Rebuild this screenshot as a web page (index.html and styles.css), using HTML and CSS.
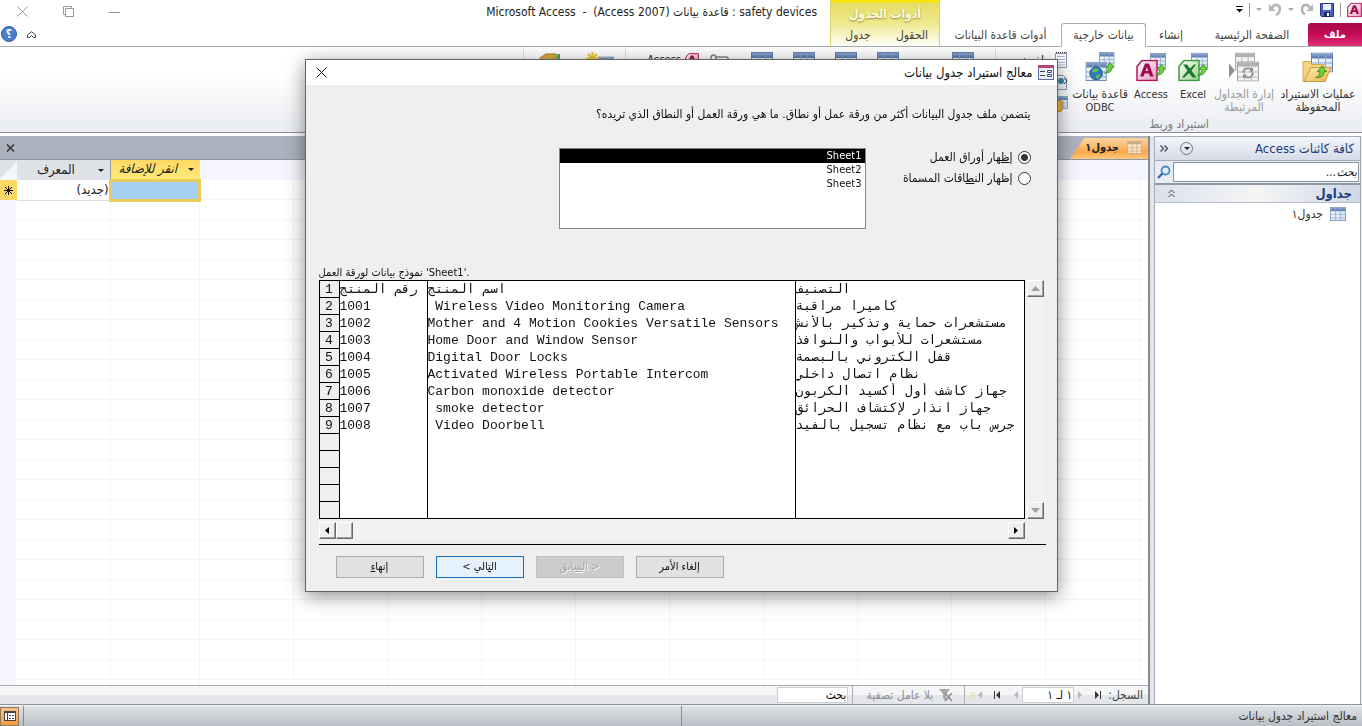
FILE: index.html
```html
<!DOCTYPE html>
<html lang="ar" dir="rtl">
<head>
<meta charset="utf-8">
<title>Microsoft Access</title>
<link rel="stylesheet" href="styles.css">
</head>
<body>
<svg class="defs" aria-hidden="true">
  <defs>
    <linearGradient id="gBlue" x1="0" y1="0" x2="0" y2="1"><stop offset="0" stop-color="#8ba6d0"/><stop offset="1" stop-color="#5577ac"/></linearGradient>
    <linearGradient id="gCell" x1="0" y1="0" x2="1" y2="1"><stop offset="0" stop-color="#fff"/><stop offset="1" stop-color="#cfe0f4"/></linearGradient>
    <linearGradient id="gFolder" x1="0" y1="0" x2="1" y2="1"><stop offset="0" stop-color="#fdf0b8"/><stop offset="1" stop-color="#eeb144"/></linearGradient>
    <linearGradient id="gPink" x1="0" y1="0" x2="1" y2="1"><stop offset="0" stop-color="#fff"/><stop offset="1" stop-color="#e79bbd"/></linearGradient>
    <linearGradient id="gGreen" x1="0" y1="0" x2="1" y2="1"><stop offset="0" stop-color="#fff"/><stop offset="1" stop-color="#9dd18b"/></linearGradient>
    <symbol id="table" viewBox="0 0 22 20">
      <rect x=".5" y=".5" width="21" height="19" fill="url(#gCell)" stroke="#6480ae"/>
      <rect x="1" y="1" width="20" height="5" fill="url(#gBlue)"/>
      <path d="M1 10.5h20M1 15.5h20M7.500 1v18M14.500 1v18" stroke="#8ea6c9" fill="none"/>
    </symbol>
    <symbol id="tableGray" viewBox="0 0 22 20">
      <rect x=".5" y=".5" width="21" height="19" fill="#f1f1f1" stroke="#a3a3a3"/>
      <rect x="1" y="1" width="20" height="4" fill="#b0b0b0"/>
      <path d="M1 10.5h20M1 15.5h20M7.500 1v18M14.500 1v18" stroke="#b9b9b9" fill="none"/>
    </symbol>
    <symbol id="tableTab" viewBox="0 0 22 20">
      <rect x=".5" y=".5" width="21" height="19" fill="#fbe3c4" stroke="#b79a78"/>
      <rect x="1" y="1" width="20" height="4" fill="#c9ad8c"/>
      <path d="M1 10.5h20M1 15.5h20M7.500 1v18M14.500 1v18" stroke="#c4a683" fill="none"/>
    </symbol>
    <symbol id="arrow" viewBox="0 0 12 13">
      <path d="M7 .6 11.500 6H9.200c.2 4-2.800 6.500-8.500 6.200C4 11 5 9 4.800 6H2.500z" fill="#6cd13c" stroke="#35891b" stroke-width=".9"/>
    </symbol>
    <symbol id="a" viewBox="0 0 22 22">
      <path d="M6 1h15v20H1V7z" fill="url(#gPink)" stroke="#b51558" stroke-width="1.500"/>
      <path d="M4 17 9 4h4l4.500 13H14l-1-3H8.500l-1 3zM9.300 11.500h3L11 7.500z" fill="#a3084b" fill-rule="evenodd"/>
    </symbol>
    <symbol id="x" viewBox="0 0 22 22">
      <path d="M6 1h15v20H1V7z" fill="url(#gGreen)" stroke="#3f9a40" stroke-width="1.500"/>
      <path d="M5 5h4l3 4 4-4h2l-4.500 6 5 7h-4l-3.500-4.500L6.500 18H4l5.500-7z" fill="#1c7a2c"/>
    </symbol>
  </defs>
</svg>

<div class="app">
  <header class="top">
    <div class="top-main">
      <div class="qat">
        <svg class="qat-a" viewBox="0 0 22 22"><use href="#a"/></svg>
        <i class="vbar"></i>
        <button class="icon-btn" aria-label="حفظ"><svg width="14" height="14" viewBox="0 0 14 14"><path d="M.5.5h13v13h-12l-1-1z" fill="#4a5fc0" stroke="#26348a"/><rect x="3" y="1" width="8" height="6" fill="#e8eefa"/><rect x="4" y="9" width="6" height="5" fill="#1f2b60"/><rect x="7" y="10" width="2" height="3" fill="#fff"/></svg></button>
        <button class="icon-btn" aria-label="إعادة"><svg width="14" height="13" viewBox="0 0 14 13"><path d="M5 11.500C1 9 1 3 5 2c3-.7 4 1 5 3" fill="none" stroke="#b3b5b8" stroke-width="2.500"/><path d="M13 1v7H6.500z" fill="#b3b5b8"/></svg></button>
        <i class="caret gray"></i>
        <button class="icon-btn" aria-label="تراجع"><svg width="14" height="13" viewBox="0 0 14 13"><path d="M8 12C13 9.500 13 3 9 2 6 1.300 5 3 4 5" fill="none" stroke="#b3b5b8" stroke-width="2.500"/><path d="M1 1v7h6.500z" fill="#b3b5b8"/></svg></button>
        <i class="caret gray"></i>
        <i class="vbar"></i>
        <button class="icon-btn" aria-label="تخصيص"><svg width="7" height="7" viewBox="0 0 7 7"><path d="M0 .5h7" stroke="#111"/><path d="M0 3h7L3.500 6.500z" fill="#111"/></svg></button>
      </div>
      <nav class="tabs">
        <button class="tab file">ملف</button>
        <button class="tab home">الصفحة الرئيسية</button>
        <button class="tab create">إنشاء</button>
        <button class="tab active">بيانات خارجية</button>
        <button class="tab db">أدوات قاعدة البيانات</button>
      </nav>
    </div>
    <div class="context">
      <div class="context-title">أدوات الجدول</div>
      <div class="context-tabs"><button class="tab">الحقول</button><button class="tab">جدول</button></div>
    </div>
    <div class="top-rest">
      <div class="title-row">
        <div class="win-title" dir="ltr">Microsoft Access &nbsp;- &nbsp;(Access 2007) قاعدة بيانات : safety devices</div>
        <div class="win-btns">
          <button class="icon-btn" aria-label="تصغير"><svg width="11" height="11"><path d="M0 6.500h11" stroke="#999"/></svg></button>
          <button class="icon-btn" aria-label="استعادة"><svg width="11" height="11" fill="none" stroke="#999"><path d="M2.500 2.500h8v8h-8zM2.500 8.500h-2v-8h8v2"/></svg></button>
          <button class="icon-btn" aria-label="إغلاق"><svg width="11" height="11" stroke="#999"><path d="M.5.5l10 10M10.500.5l-10 10"/></svg></button>
        </div>
      </div>
      <div class="help-row">
        <button class="icon-btn" aria-label="تصغير الشريط"><svg width="9" height="7" fill="#fff" stroke="#444"><path d="M.5 4 4.500.7 8.500 4v2.500h-2L4.500 4.500 2.500 6.500h-2z"/></svg></button>
        <button class="help" aria-label="تعليمات">؟</button>
      </div>
    </div>
  </header>

  <section class="ribbon">
    <div class="group import">
      <div class="items">
        <button class="big wide"><svg width="32" height="30" viewBox="0 0 32 30"><use href="#table" x="9" y="0" width="22" height="20"/><path d="M1 12V9h7l2 3h12v17H1z" fill="#f4d382" stroke="#d4a94e"/><path d="M2 29 9 15h20l-6 14z" fill="url(#gFolder)" stroke="#c99a3d"/><use href="#arrow" x="13" y="13" width="12" height="13"/></svg><span>عمليات الاستيراد<br>المحفوظة</span></button>
        <button class="big mid" disabled><svg width="32" height="30" viewBox="0 0 32 30"><use href="#tableGray" x="6" y="0" width="22" height="18"/><use href="#tableGray" x="9" y="9" width="22" height="20"/><path d="M1 11v14l6-7z" fill="#8f8f8f"/><path d="M15 20a5 5 0 0 1 9-2m1 2a5 5 0 0 1-9 3" fill="none" stroke="#8b8b8b" stroke-width="1.500"/><path d="M25 15v4h-4zM15 26v-4h4z" fill="#8b8b8b"/></svg><span>إدارة الجداول<br>المرتبطة</span></button>
        <button class="big slim"><svg width="30" height="30" viewBox="0 0 30 30"><use href="#table" x="13" y="0" width="17" height="16"/><use href="#x" x="0" y="7" width="22" height="22"/><use href="#arrow" x="19" y="11" width="11" height="13"/></svg><span class="latin">Excel</span></button>
        <button class="big slim"><svg width="30" height="30" viewBox="0 0 30 30"><use href="#table" x="14" y="0" width="16" height="16"/><use href="#a" x="0" y="7" width="22" height="22"/><use href="#arrow" x="19" y="11" width="11" height="13"/></svg><span class="latin">Access</span></button>
        <button class="big mid"><svg width="32" height="32" viewBox="0 0 32 32"><use href="#table" x="15" y="0" width="16" height="15"/><use href="#table" x="1" y="10" width="22" height="20"/><circle cx="12" cy="22" r="6.500" fill="#2d79bd" stroke="#225b91"/><path d="M8 19c2-3 5-2 6-1s-1 3-3 3-4 0-3-2zM12 24c2-1 5-1 4 1s-3 3-4 2z" fill="#67bb55"/><use href="#arrow" x="20" y="10" width="11" height="13"/></svg><span>قاعدة بيانات<br><span class="latin">ODBC</span></span></button>
        <div class="small-col">
          <button class="small"><svg width="14" height="16" viewBox="0 0 14 16"><path d="M1.500 1.500h11v14h-11z" fill="#fff" stroke="#8796ad"/><path d="M2 .5h11" stroke="#222" stroke-dasharray="1 1"/><path d="M3 4.500h8M3 7.500h8M3 10.500h8M3 13h8" stroke="#a9b9d2"/></svg>ملف نصي</button>
          <button class="small" aria-label="ملف XML"><svg width="14" height="16" viewBox="0 0 14 16"><path d="M1.500 1.500h8l3 3v11h-11z" fill="#f2f6fc" stroke="#8796ad"/><circle cx="7" cy="7" r="3" fill="#3a82b4"/><path d="M4 4 1 7l3 3M10 4l3 3-3 3" stroke="#333" fill="none"/></svg></button>
          <button class="small" aria-label="المزيد"><svg width="14" height="16" viewBox="0 0 14 16"><use href="#table" width="14" height="13"/><path d="M1 6c0-2 7-2 7 0v8c0 2-7 2-7 0z" fill="#f0b739" stroke="#b97d1c"/></svg></button>
        </div>
      </div>
      <div class="group-label">استيراد وربط</div>
    </div>
    <div class="group export">
      <div class="items">
        <button class="slot first" aria-label="عمليات التصدير المحفوظة"><svg width="22" height="20"><use href="#table"/></svg></button>
        <button class="slot" aria-label="Excel"><svg width="22" height="20"><use href="#table"/></svg></button>
        <button class="slot" aria-label="ملف نصي"><svg width="22" height="20"><use href="#table"/></svg></button>
        <button class="slot" aria-label="ملف XML"><svg width="22" height="20"><use href="#table"/></svg></button>
        <button class="slot" aria-label="PDF"><svg width="22" height="20"><use href="#table"/></svg></button>
        <button class="slot" aria-label="البريد الإلكتروني"><svg width="22" height="20" viewBox="0 0 22 20" fill="none" stroke="#7c8798" stroke-width="1.500"><path d="M2 20V6c0-4 5-4 5 0v12M7 5h11l3 4v11"/></svg></button>
        <button class="small latin"><svg width="14" height="16" viewBox="0 0 22 22"><use href="#a"/></svg>Access</button>
      </div>
    </div>
    <div class="group collect">
      <div class="items">
        <button class="slot" aria-label="إنشاء بريد إلكتروني"><svg width="28" height="24" viewBox="0 0 28 24"><use href="#table" x="12" y="4" width="16" height="16"/><path d="M6.500 0v13M0 6.500h13M2 2l9 9M11 2l-9 9" stroke="#ecc42f" stroke-width="2"/></svg></button>
        <button class="slot" aria-label="إدارة الردود"><svg width="22" height="24" viewBox="0 0 22 24"><path d="M1 6 7 2h10v14H1z" fill="#d9a93c" stroke="#a67c22"/><path d="M18 2h3v14h-3z" fill="#37b34a"/></svg></button>
      </div>
    </div>
  </section>

  <main class="work">
    <aside class="nav">
      <div class="nav-head"><h2>كافة كائنات Access</h2><button class="round" aria-label="القائمة"><i class="caret"></i></button><button class="chev" aria-label="طي"><svg width="8" height="7" fill="none" stroke="#444" stroke-width="1.300"><path d="M.5.5l3 3-3 3M4.500.5l3 3-3 3"/></svg></button></div>
      <div class="nav-search"><input type="text" value="بحث..." aria-label="بحث"><svg width="14" height="14" viewBox="0 0 14 14" fill="none"><circle cx="8.500" cy="5.500" r="4" stroke="#4a8ac6" stroke-width="1.800" fill="#dcecf9"/><path d="M5.500 8.500 1 13" stroke="#2c5f9e" stroke-width="2.200"/></svg></div>
      <div class="nav-cat"><b>جداول</b><svg width="7" height="9" fill="none" stroke="#444"><path d="M.5 4l3-3 3 3M.5 8l3-3 3 3"/></svg></div>
      <a class="nav-item" href="#t1"><svg width="16" height="14"><use href="#table"/></svg>جدول١</a>
    </aside>
    <section class="doc">
      <div class="doc-tabs">
        <button class="doc-tab"><svg width="15" height="13" viewBox="0 0 22 20"><use href="#tableTab"/></svg>جدول١</button>
        <button class="doc-close" aria-label="إغلاق الجدول"><svg width="9" height="8" stroke="#333" stroke-width="1.500"><path d="M1 .5l7 7M8 .5l-7 7"/></svg></button>
      </div>
      <div class="sheet" dir="ltr">
        <table class="datasheet">
          <tr><th class="corner"></th><th class="id-col"><div class="col-head"><span>المعرف</span><i class="caret"></i></div></th><th class="add-col"><div class="col-head"><em>انقر للإضافة</em><i class="caret"></i></div></th></tr>
          <tr><td class="row-mark"><svg width="9" height="9" stroke="#111"><path d="M4.500 0v9M0 4.500h9M1 1l7 7M8 1 1 8"/></svg></td><td class="new" dir="rtl">(جديد)</td><td class="cell-on"></td></tr>
        </table>
      </div>
      <div class="recbar">
        <span class="rec-label">السجل:</span>
        <button class="icon-btn" aria-label="الأول"><svg width="6" height="8"><path d="M0 0v8l4-4z" fill="#333"/><path d="M5.500 0v8" stroke="#333"/></svg></button>
        <button class="icon-btn" aria-label="السابق"><svg width="5" height="8"><path d="M0 0v8l4-4z" fill="#b4b8be"/></svg></button>
        <input class="rec-no" type="text" value="١ لـ ١" aria-label="رقم السجل">
        <button class="icon-btn" aria-label="التالي"><svg width="5" height="8"><path d="M5 0v8L1 4z" fill="#b4b8be"/></svg></button>
        <button class="icon-btn" aria-label="الأخير"><svg width="7" height="8"><path d="M6 0v8L2 4z" fill="#333"/><path d="M.5 0v8" stroke="#333"/></svg></button>
        <button class="icon-btn" aria-label="سجل جديد"><svg width="13" height="9"><path d="M13 0v8L9 4z" fill="#b4b8be"/><path d="M4 0v9M0 4.500h8M1 1l6 7M7 1 1 8" stroke="#e8dfae"/></svg></button>
        <button class="filter" disabled><svg width="14" height="13" viewBox="0 0 14 13"><path d="M0 0h11L7 5v7L4 9V5z" fill="#a5a5a8"/><path d="M6 4l7 8M13 4l-7 8" stroke="#8c8c90" stroke-width="1.500"/></svg>بلا عامل تصفية</button>
        <input class="rec-find" type="text" value="بحث" aria-label="بحث في السجلات">
      </div>
    </section>
  </main>

  <footer class="status">
    <div class="status-main">معالج استيراد جدول بيانات</div>
    <div class="status-mid"></div>
    <button class="view" aria-label="طريقة عرض"><svg width="12" height="10"><rect x=".5" y=".5" width="11" height="9" fill="#fff" stroke="#444"/><path d="M0 1.500h12M3.500 2v8M5 4.500h2M8 4.500h2M5 7.500h2M8 7.500h2" stroke="#444"/></svg></button>
  </footer>
</div>

<div class="overlay">
  <div class="dialog" role="dialog" aria-labelledby="dlg-title">
    <div class="dlg-head">
      <svg width="16" height="15" viewBox="0 0 16 15"><rect x=".5" y=".5" width="15" height="14" fill="#eaf0fb" stroke="#5a6ea6"/><rect width="16" height="3" fill="#b2476f"/><path d="M2 6.500h5M2 10.500h5" stroke="#444"/><path d="M9.500 5.500h4v2h-4zM9.500 9.500h4v2h-4z" fill="#fff" stroke="#37509c"/></svg>
      <h1 id="dlg-title">معالج استيراد جدول بيانات</h1>
      <button class="icon-btn" aria-label="إغلاق"><svg width="11" height="11" stroke="#111"><path d="M.5.5l10 10M10.500.5l-10 10"/></svg></button>
    </div>
    <div class="dlg-body">
      <p class="question">يتضمن ملف جدول البيانات أكثر من ورقة عمل أو نطاق. ما هي ورقة العمل أو النطاق الذي تريده؟</p>
      <div class="choose">
        <div class="radios">
          <label><input type="radio" name="src" checked><span>إ<u>ظ</u>هار أوراق العمل</span></label>
          <label><input type="radio" name="src"><span>إظهار الن<u>ط</u>اقات المسماة</span></label>
        </div>
        <select class="sheets" size="5" aria-label="أوراق العمل"><option selected>Sheet1</option><option>Sheet2</option><option>Sheet3</option></select>
      </div>
      <div class="sample" dir="ltr">
        <p class="sample-label">نموذج بيانات لورقة العمل 'Sheet1'.</p>
        <div class="preview">
          <table class="rows">
            <tr><th>1</th><td class="c1">رقم المنتج</td><td class="c2">اسم المنتج</td><td>التصنيف</td></tr>
            <tr><th>2</th><td>1001</td><td>&nbsp;Wireless Video Monitoring Camera</td><td>كاميرا مراقبة</td></tr>
            <tr><th>3</th><td>1002</td><td>Mother and 4 Motion Cookies Versatile Sensors</td><td>مستشعرات حماية وتذكير بالأنش</td></tr>
            <tr><th>4</th><td>1003</td><td>Home Door and Window Sensor</td><td>مستشعرات للأبواب والنوافذ</td></tr>
            <tr><th>5</th><td>1004</td><td>Digital Door Locks</td><td>قفل الكتروني بالبصمة</td></tr>
            <tr><th>6</th><td>1005</td><td>Activated Wireless Portable Intercom</td><td>نظام اتصال داخلي</td></tr>
            <tr><th>7</th><td>1006</td><td>Carbon monoxide detector</td><td>جهاز كاشف أول أكسيد الكربون</td></tr>
            <tr><th>8</th><td>1007</td><td>&nbsp;smoke detector</td><td>جهاز انذار لإكتشاف الحرائق</td></tr>
            <tr><th>9</th><td>1008</td><td>&nbsp;Video Doorbell</td><td>جرس باب مع نظام تسجيل بالفيد</td></tr>
            <tr><th></th><td></td><td></td><td></td></tr>
            <tr><th></th><td></td><td></td><td></td></tr>
            <tr><th></th><td></td><td></td><td></td></tr>
            <tr><th></th><td></td><td></td><td></td></tr>
            <tr><th></th><td></td><td></td><td></td></tr>
          </table>
          <div class="vscroll"><button aria-label="أعلى"><svg width="9" height="5"><path d="M0 5h9L4.500 0z" fill="#a0a0a0"/></svg></button><button aria-label="أسفل"><svg width="9" height="5"><path d="M0 0h9L4.500 5z" fill="#a0a0a0"/></svg></button></div>
          <div class="hscroll"><button aria-label="يسار"><svg width="4" height="7"><path d="M4 0v7L0 3.500z"/></svg></button><button aria-label="شريط التمرير"></button><button class="end" aria-label="يمين"><svg width="4" height="7"><path d="M0 0v7l4-3.500z"/></svg></button></div>
        </div>
      </div>
      <hr>
      <div class="actions" dir="ltr">
        <button class="btn" dir="rtl">إنها<u>ء</u></button>
        <button class="btn primary" dir="rtl">ال<u>ت</u>الي &gt;</button>
        <button class="btn" dir="rtl" disabled>&lt; ال<u>س</u>ابق</button>
        <button class="btn" dir="rtl">إلغاء الأمر</button>
      </div>
    </div>
  </div>
</div>
</body>
</html>
```
FILE: styles.css
```css
* { box-sizing: border-box; }
html, body { height: 100%; margin: 0; }
body { font: 12px/14px "DejaVu Sans Condensed", "DejaVu Sans", sans-serif; color: #222; background: #fff; overflow: hidden; }
button, input, select { font: inherit; color: inherit; margin: 0; }
button { padding: 0; border: 0; background: none; white-space: nowrap; }
h1, h2, p { margin: 0; font-size: inherit; font-weight: normal; }
svg { display: block; flex: none; }
.defs { position: absolute; width: 0; height: 0; }
.app { display: flex; flex-direction: column; height: 100%; }
.icon-btn { display: flex; align-items: center; justify-content: center; }
.latin { font-size: 11px; }
.caret { flex: none; width: 0; height: 0; border: 3px solid transparent; border-top-color: #222; border-bottom: 0; }
.caret.gray { border-top-color: #aaa; }
.vbar { width: 1px; height: 14px; background: #999; }

/* Title and tabs */
.top { display: flex; height: 47px; color: #444; }
.top-main { width: 422px; display: flex; flex-direction: column; }
.qat { height: 23px; display: flex; align-items: center; gap: 6px; padding-bottom: 4px; }
.qat-a { width: 15px; height: 16px; }
.tabs { flex: 1; display: flex; }
.tab { border-bottom: 1px solid #a9acb1; text-align: center; }
.tab.file { width: 54px; color: #fff; font-weight: bold; font-size: 11px; background: linear-gradient(#a8084a, #c40a55 50%, #e03079); border-radius: 3px 0 0; }
.tab.home { width: 112px; }
.tab.create { width: 50px; }
.tab.active { width: 85px; border: 1px solid #a9acb1; border-bottom-color: #fff; border-radius: 3px 3px 0 0; }
.tab.db { flex: 1; }
.context { width: 110px; display: flex; flex-direction: column; border: 1px solid #d9d36c; border-width: 0 1px; background: linear-gradient(#f7e400 2px, #e6dc62 3px, #efe98f 50%, #fff); }
.context-title { height: 23px; padding-top: 7px; text-align: center; font-weight: bold; color: #fffde4; text-shadow: 0 1px 2px #8a842c; }
.context-tabs { flex: 1; display: flex; }
.context-tabs .tab { flex: 1; }
.top-rest { flex: 1; display: flex; flex-direction: column; border-bottom: 1px solid #a9acb1; }
.title-row { height: 23px; display: flex; justify-content: space-between; align-items: center; padding: 0 13px 0 17px; }
.win-title { color: #222; }
.win-btns { display: flex; gap: 35px; }
.help-row { display: flex; justify-content: flex-end; align-items: center; gap: 10px; padding-top: 3px; padding-left: 1px; }
.help { width: 16px; height: 16px; border-radius: 50%; background: #4a7fce; border: 1px solid #2f5fa8; color: #fff; font-weight: bold; line-height: 12px; }

/* Ribbon */
.ribbon { height: 86px; display: flex; flex: none; overflow: hidden; background: linear-gradient(#fff 30%, #e9ecf0); border-bottom: 1px solid #8c9096; }
.group { display: flex; flex-direction: column; border-left: 1px solid #dcdfe3; }
.import { width: 367px; }
.export { width: 370px; }
.collect { width: 102px; }
.items { display: flex; flex: 1; padding-top: 5px; align-items: flex-start; }
.big { display: flex; flex-direction: column; align-items: center; gap: 5px; line-height: 13px; color: #333; }
.big svg { height: 31px; }
.big:disabled { color: #999; }
.big.wide { width: 88px; }
.big.mid { width: 60px; }
.big.slim { width: 42px; }
.group-label { height: 15px; text-align: center; color: #767b82; }
.small-col { display: flex; flex-direction: column; gap: 6px; padding-right: 2px; }
.small { display: flex; align-items: center; gap: 4px; }
.slot { display: flex; justify-content: center; width: 42px; }
.slot.first { width: 64px; margin-left: 22px; }
.collect .slot { width: 50px; }

/* Workspace */
.work { flex: 1; display: flex; min-height: 0; margin-top: 3px; background: #e3e6ea; border-bottom: 1px solid #8c9199; }
.nav { width: 207px; margin: 0 1px 0 4px; background: #fff; border: 1px solid #a2abb8; border-width: 1px 1px 0; display: flex; flex-direction: column; }
.nav-head { height: 24px; display: flex; align-items: center; gap: 12px; padding: 0 6px 0 5px; background: linear-gradient(#f3f5f9, #d5dce8); border-bottom: 1px solid #a2abb8; color: #1f3d7c; }
.nav-head h2 { flex: 1; font-size: 13px; }
.round { width: 13px; height: 13px; border: 1px solid #777; border-radius: 50%; display: flex; align-items: center; justify-content: center; }
.nav-search { display: flex; align-items: center; gap: 2px; padding: 1px 1px 1px 2px; background: #e9edf3; border-bottom: 2px solid #8f98a5; }
.nav-search input { flex: 1; min-width: 0; height: 20px; border: 1px solid #8c93a0; padding: 0 1px; font-style: italic; }
.nav-cat { height: 18px; display: flex; align-items: center; justify-content: space-between; padding: 0 8px 0 13px; color: #1f3d7c; font-size: 13px; background: linear-gradient(90deg, #dbe1ed, #f5f5f5, #cfd7e6); border-bottom: 1px solid #b5bdca; }
.nav-item { display: flex; align-items: center; gap: 7px; padding: 4px 14px; color: #333; text-decoration: none; }
.doc { flex: 1; min-width: 0; display: flex; flex-direction: column; border-right: 2px solid #858a92; }
.doc-tabs { height: 24px; flex: none; display: flex; justify-content: space-between; align-items: stretch; background: #abb2bd; border-bottom: 1px solid #8f969f; padding-left: 6px; }
.doc-tab { display: flex; align-items: center; gap: 8px; width: 78px; padding-right: 6px; font-weight: bold; font-size: 11px; background: linear-gradient(#fcdcb1, #f9a948 70%, #fcc983); clip-path: polygon(14px 2px, 100% 2px, 100% 100%, 0 100%); }
.doc-close { display: flex; align-items: center; }
.sheet { flex: 1; min-height: 0; background:
  linear-gradient(90deg, #f4f5fd 16px, transparent 16px) 0 20px no-repeat,
  linear-gradient(#f4f5fd, #f4f5fd) 0 0 / 100% 20px no-repeat,
  linear-gradient(#f5f5f6, #f5f5f6) 110px 0 / 1px 100% no-repeat,
  repeating-linear-gradient(90deg, transparent 0 93px, #f5f5f6 93px 94px) 106px 0 no-repeat,
  repeating-linear-gradient(#fff 0 19px, #f5f5f6 19px 20px); }
.datasheet { border-collapse: collapse; table-layout: fixed; width: 201px; font-size: 13px; }
.datasheet th, .datasheet td { height: 20px; padding: 0; font-weight: normal; }
.corner { width: 17px; background: linear-gradient(135deg, #dfe2e8 50%, #f5f6f8 50%); }
.id-col { width: 93px; background: #dee1e6; }
.add-col { background: linear-gradient(#ffd965, #ffe978); border-left: 1px solid #999; }
.col-head { display: flex; align-items: center; justify-content: space-between; padding: 0 6px 0 8px; }
.id-col .col-head { padding-left: 20px; }
.row-mark { background: #ffd765; }
.row-mark svg { margin: 0 auto; }
.datasheet .new { text-align: right; background: #fff; border-bottom: 1px solid #ddd; }
.datasheet .cell-on { background: #a5cef0; border: 3px solid #e9cc5a; }
.recbar { height: 19px; flex: none; display: flex; align-items: center; gap: 12px; padding-right: 5px; color: #444; background: linear-gradient(#f4f5f7 50%, #e4e6ea 50%); border-top: 1px solid #a9adb3; }
.recbar .rec-label { margin-left: -5px; }
.recbar input { height: 16px; border: 1px solid #ccced3; background: #fff; padding: 0 1px; color: #111; }
.recbar .rec-no { width: 52px; margin: 0 -8px; }
.filter { width: 113px; display: flex; align-items: center; gap: 6px; height: 18px; padding: 0 11px; border: 1px solid #a9adb3; border-width: 0 1px; color: #8a8d92; margin: 0 -8px; }
.rec-find { width: 71px; }

/* Status bar */
.status { height: 21px; flex: none; display: flex; align-items: center; background: linear-gradient(#e0e3e7, #b9bec5); border-top: 1px solid #f3f4f6; color: #333; }
.status-main { width: 50%; padding: 0 5px; border-left: 1px solid #878c93; line-height: 20px; }
.status-mid { flex: 1; height: 20px; border-left: 1px solid #878c93; }
.view { width: 19px; height: 19px; margin-right: 4px; display: flex; align-items: center; justify-content: center; background: linear-gradient(#fbc389, #f79b3f); border: 1px solid #8c7a60; }

/* Wizard */
.overlay { position: fixed; inset: 0; display: flex; justify-content: center; align-items: flex-start; padding-top: 59px; }
.dialog { width: 753px; background: #efefef; border: 1px solid #636363; box-shadow: 0 4px 18px rgba(0, 0, 0, .45); color: #111; }
.dlg-head { height: 25px; display: flex; align-items: center; gap: 5px; padding: 0 3px 0 10px; background: #fff; }
.dlg-head h1 { flex: 1; font-size: 13px; }
.dlg-body { padding: 22px 11px 13px 13px; }
.question { padding: 0 15px; }
.choose { display: flex; height: 81px; margin-top: 27px; padding-right: 15px; }
.radios { width: 165px; display: flex; flex-direction: column; gap: 7px; padding-top: 2px; }
.radios label { display: flex; align-items: center; gap: 5px; height: 14px; }
.radios input { appearance: none; width: 13px; height: 13px; border: 1px solid #333; border-radius: 50%; background: #fff; }
.radios input:checked { background: radial-gradient(#333 0 3px, #fff 4px); }
.sheets { width: 307px; padding: 0; border: 1px solid #82868e; border-radius: 0; background: #fff; overflow: hidden; font-size: 11px; }
.sheets option { min-height: 14px; height: 14px; line-height: 14px; padding: 0 3px; text-align: right; color: #111; }
.sheets option:checked { background: #000 linear-gradient(#000, #000); color: #fff !important; }
.sample { margin-top: 37px; }
.sample-label { font-size: 11px; }
.preview { display: grid; grid-template-columns: 1fr 17px; column-gap: 2px; padding-right: 2px; }
.rows { border-collapse: collapse; table-layout: fixed; width: 100%; background: #fff; border: 1px solid #000; font: 13px/14px "Liberation Mono", "DejaVu Sans Mono", monospace; }
.rows th, .rows td { height: 17px; padding: 2px 0 0; white-space: nowrap; overflow: hidden; text-align: left; border-left: 1px solid #000; }
.rows th { width: 20px; text-align: center; font-weight: normal; background: #efefef; border: 1px solid #000; }
.rows .c1 { width: 88px; }
.rows .c2 { width: 368px; }
.vscroll, .hscroll { display: flex; background: repeating-conic-gradient(#e9e9e9 0 25%, #fafafa 0 50%) 0 0 / 2px 2px; }
.vscroll { flex-direction: column; justify-content: space-between; }
.hscroll { margin-top: 3px; }
.vscroll button, .hscroll button { width: 17px; height: 17px; display: flex; align-items: center; justify-content: center; background: #efefef; border: 1px solid; border-color: #fff #696969 #696969 #fff; box-shadow: inset -1px -1px #a0a0a0; }
.hscroll .end { margin-left: auto; }
hr { margin: 5px 0 11px; border: 0; border-top: 1px solid #000; }
.actions { display: flex; gap: 12px; padding-left: 17px; }
.btn { width: 88px; height: 22px; border: 1px solid #adadad; background: #e1e1e1; font-size: 11px; }
.btn.primary { background: #e5f1fb; border-color: #1b70b8; }
.btn:disabled { background: #ccc; border-color: #bfbfbf; color: #a0a0a0; text-shadow: 1px 1px #fff; }
```
